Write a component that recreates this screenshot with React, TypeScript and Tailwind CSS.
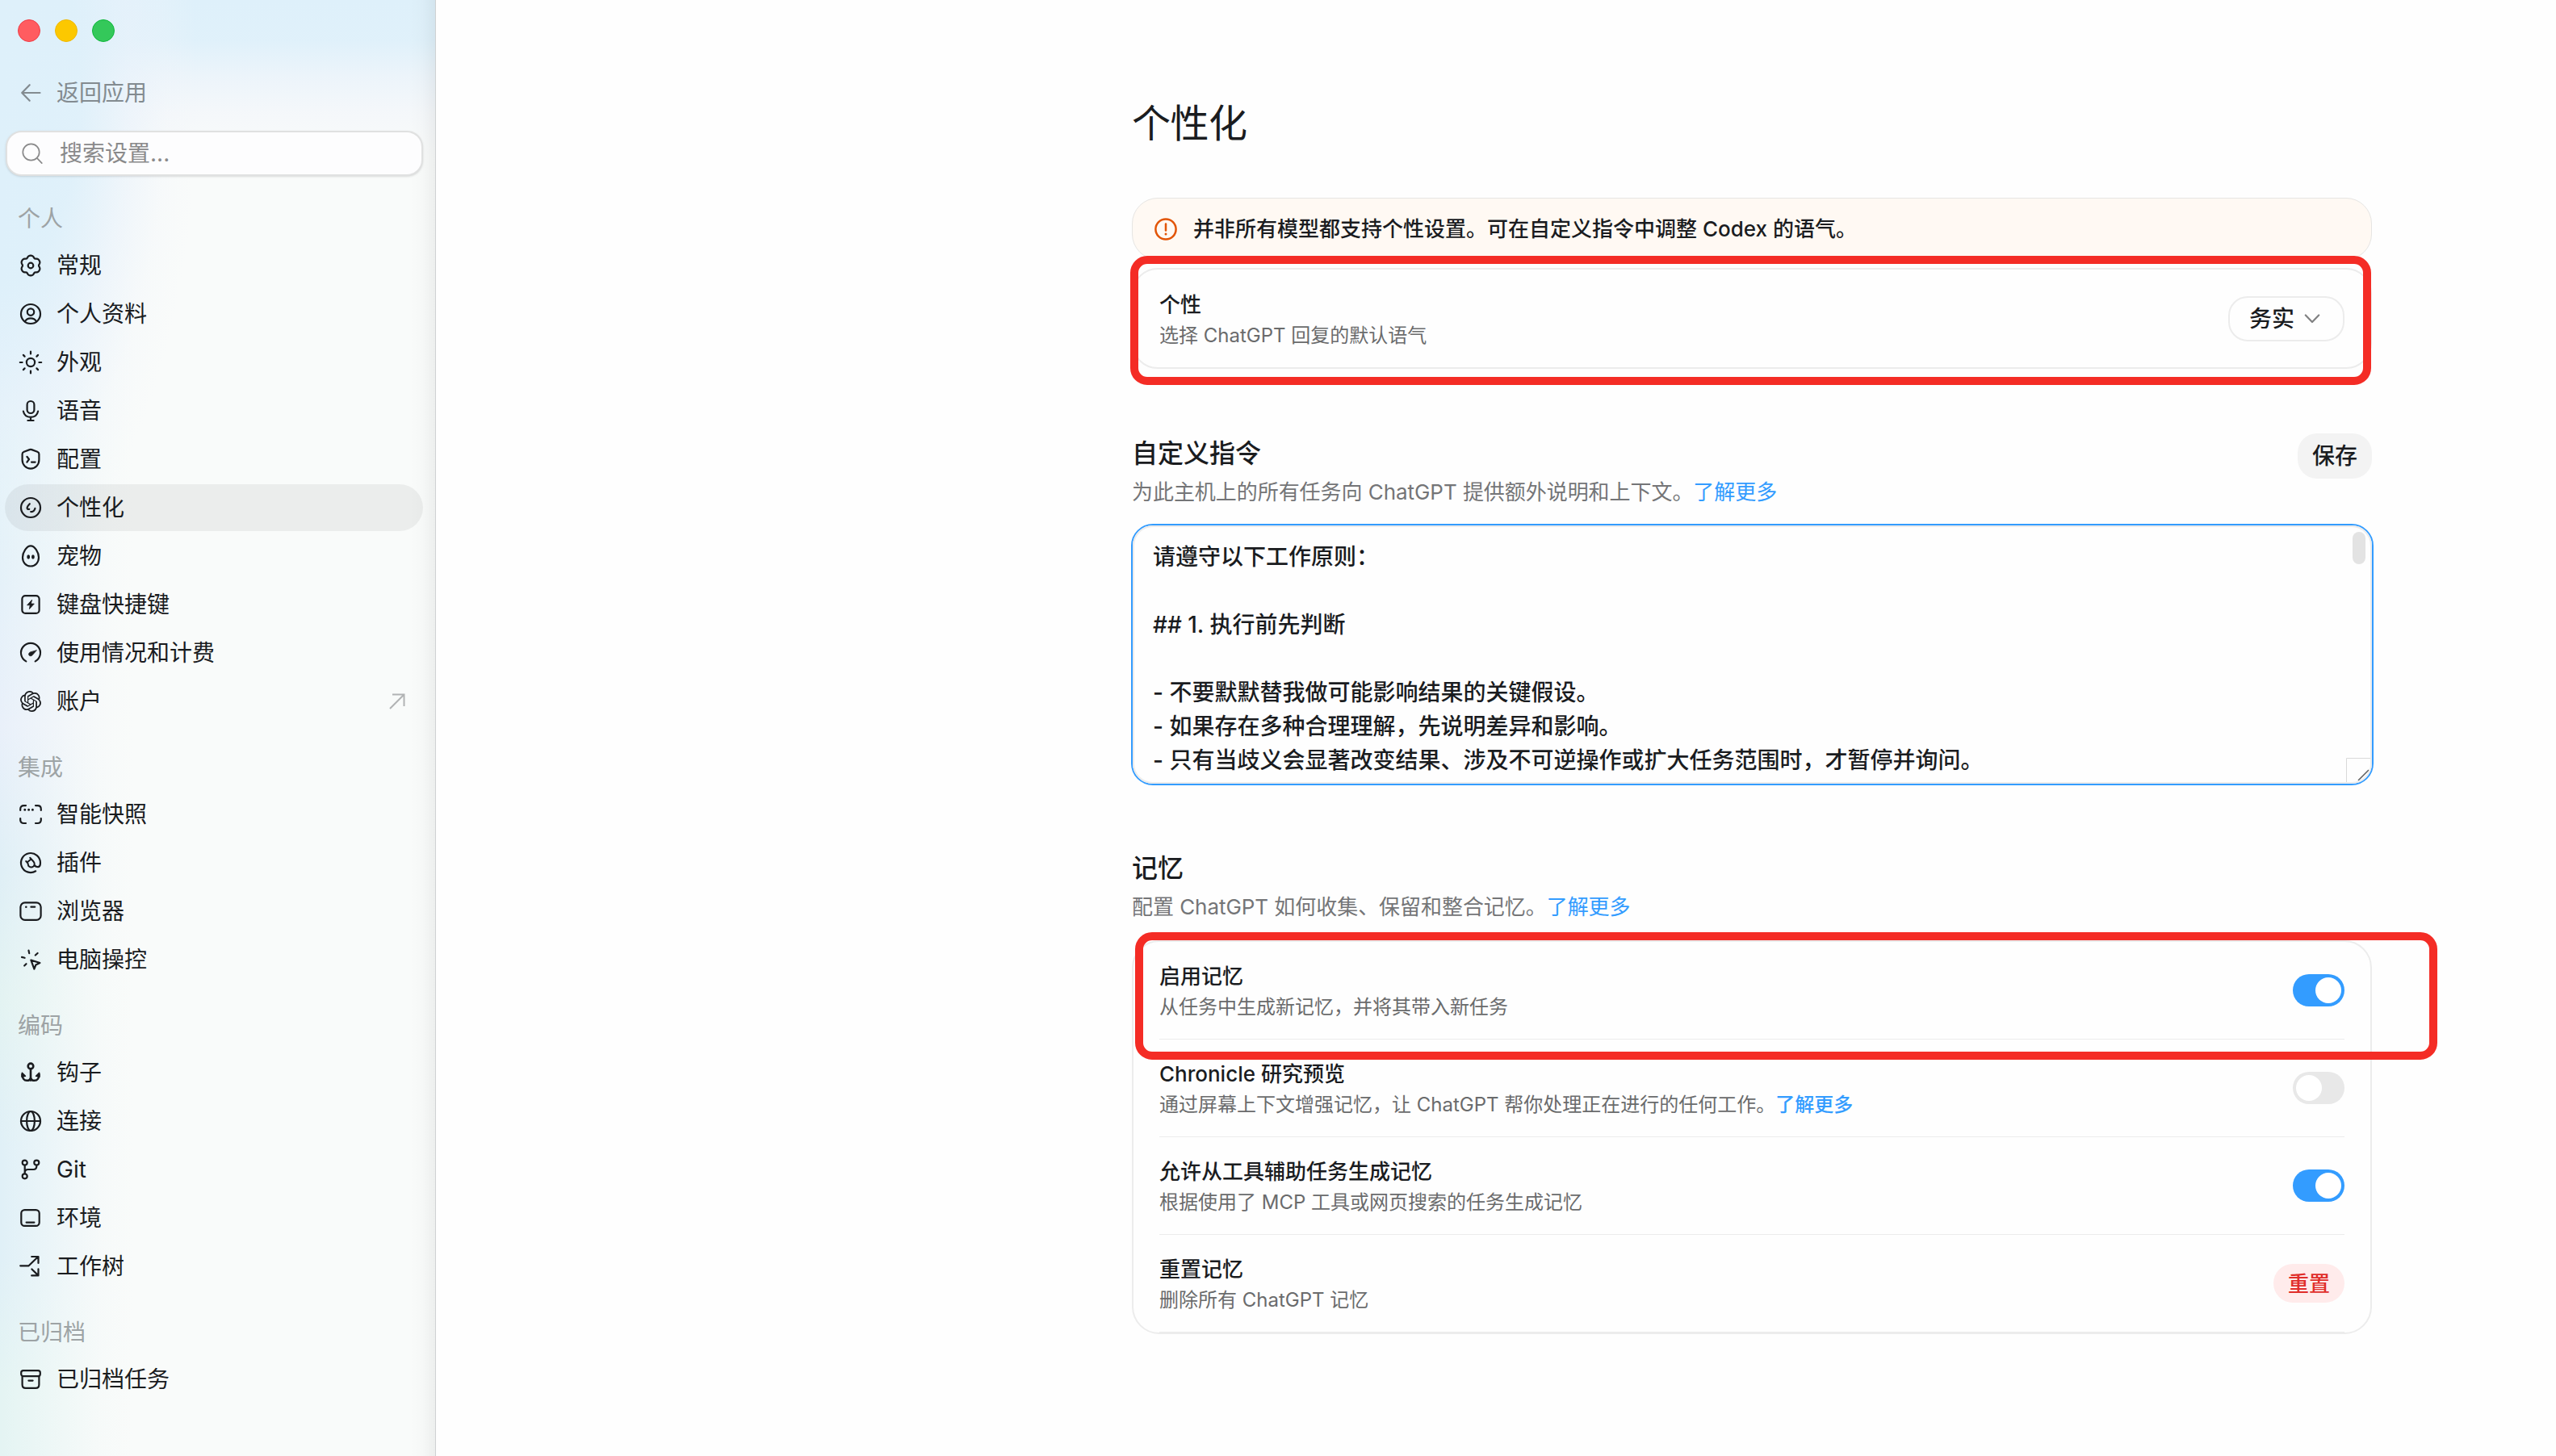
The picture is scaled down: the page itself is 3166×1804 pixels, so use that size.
import { useState } from "react";
import type { ReactNode } from "react";
import { SiOpenai } from "react-icons/si";

// Six-lobed outline used by the settings icon
const gearPath =
  Array.from({ length: 90 }, (_, i) => {
    const a = (i / 90) * Math.PI * 2;
    const r = 11.4 + 1.15 * Math.cos(6 * (a - Math.PI / 2)) - 0.25 * Math.cos(12 * (a - Math.PI / 2));
    return `${i === 0 ? "M" : "L"}${(14 + r * Math.cos(a)).toFixed(2)} ${(14 + r * Math.sin(a)).toFixed(2)}`;
  }).join("") + "Z";

function Icon({ children }: { children: ReactNode }) {
  return (
    <svg viewBox="0 0 28 28" className="w-7 h-7 shrink-0 overflow-visible" fill="none" stroke="currentColor" strokeWidth={2.2} strokeLinecap="round" strokeLinejoin="round">
      {children}
    </svg>
  );
}

const icons: Record<string, ReactNode> = {
  gear: <Icon><path d={gearPath} /><circle cx="14" cy="14" r="3.3" /></Icon>,
  profile: <Icon><circle cx="14" cy="14" r="12" /><circle cx="14" cy="11.6" r="4.2" /><path d="M7 23.2C8.6 20.6 11 19.4 14 19.4s5.4 1.2 7 3.8" /></Icon>,
  sun: (
    <Icon>
      <circle cx="14" cy="14" r="5.1" />
      <path d="M14 .6v2.8M14 24.6v2.8M.8 14h2.8M24.4 14h2.8M4.9 4.9l1.7 1.7M21.4 21.4l1.7 1.7M4.9 23.1l1.7-1.7M21.4 6.6l1.7-1.7" />
    </Icon>
  ),
  mic: <Icon><rect x="9.6" y="2" width="8.8" height="15" rx="4.4" /><path d="M4.9 14.6C5.8 19 9.4 21.8 14 21.8s8.2-2.8 9.1-7.2M14 21.8v4M10.4 26h7.2" /></Icon>,
  shield: (
    <Icon>
      <path d="M12.7 2.1a3.6 3.6 0 0 1 2.6 0l7 2.7c1.3.5 2.1 1.5 2.1 2.8v7.2c0 6.2-4.6 10.8-10.4 10.8S3.6 21 3.6 14.8V7.6c0-1.3.8-2.3 2.1-2.8z" />
      <path d="M9.4 10.8l2.6 3.2-2.6 3.6M15 17.6h4.6" />
    </Icon>
  ),
  face: <Icon><circle cx="14" cy="14" r="12" /><path d="M12.8 9.2C11 11 9.6 13.2 9.6 14.6c0 1 .8 1.5 2.6 1.3M14.2 19.1c2.6 0 4.6-1.6 5.2-4.2" /></Icon>,
  egg: (
    <Icon>
      <path d="M14 1.3C19 1.3 24 9.2 24 15.8c0 6-4.2 10.7-10 10.7S4 21.8 4 15.8C4 9.2 9 1.3 14 1.3z" />
      <ellipse cx="11.2" cy="15" rx="1.9" ry="2.7" fill="currentColor" stroke="none" />
      <ellipse cx="16.9" cy="15" rx="1.9" ry="2.7" fill="currentColor" stroke="none" />
    </Icon>
  ),
  keyboard: (
    <Icon>
      <rect x="3.4" y="3.1" width="21.2" height="21.8" rx="4" />
      <path d="M15.4 8.4l-5.8 6.4h3.6l-.8 4.8 5.9-6.5h-3.7z" fill="currentColor" strokeWidth=".8" />
    </Icon>
  ),
  gauge: (
    <Icon>
      <path d="M8.3 24.4a12 12 0 1 1 11.4 0" />
      <path d="M21.2 10.9l-5.2 5.9c-1.2 1.2-3 1.3-3.9.2-.9-1.2-.5-2.9.9-3.8z" fill="currentColor" strokeWidth=".8" />
    </Icon>
  ),
  account: <SiOpenai className="w-7 h-7 p-px shrink-0" />,
  snapshot: (
    <Icon>
      <path d="M8 3.1H5.5C2.8 3.1 1.2 4.7 1.2 7.4V9M20 3.1h2.5c2.7 0 4.3 1.6 4.3 4.3V9M8 25H5.5c-2.7 0-4.3-1.6-4.3-4.3V19M20 25h2.5c2.7 0 4.3-1.6 4.3-4.3V19" />
      <path d="M6.8 8.2h0M11.6 8.2h0M16.4 8.2h0" strokeWidth="3" />
    </Icon>
  ),
  plugin: (
    <Icon>
      <path d="M20.2 24.3A12 12 0 1 1 26 14c0 3.2-1.1 5.2-3.3 5.2-1.6 0-2.7-.8-3.7-1.9" />
      <path d="M9.6 13.6l5.2-4.3M8.2 12l2.3 2.7M13.2 7.8l4.3 4.7c1.8 2 1.5 4.6-.2 6.1-1.8 1.5-4.5 1.2-6-.7l-.9-3.3M18.2 17.4l1.2.8" strokeWidth="2" />
    </Icon>
  ),
  browser: <Icon><rect x="1.4" y="3.3" width="25.2" height="21.6" rx="5.5" /><path d="M8.3 8.7h0" strokeWidth="2.6" /><path d="M14.4 8.7h4.8" /></Icon>,
  computer: (
    <Icon>
      <path d="M11.5 2.7l.7 3.4M22.6 6l-2.8 2.5M3 10.9l3.6.9M6.2 21.5l2.3-2.3" />
      <path d="M14.4 14.6l11 3.4-5 2.4-2 5.2z" />
    </Icon>
  ),
  anchor: (
    <Icon>
      <g strokeWidth="2.6">
        <circle cx="14" cy="5.9" r="3.3" />
        <path d="M14 9.4v14.2M3.6 16.2c0 4.6 2.3 7.6 5.6 7.6 2.4 0 4.4-1.4 4.8-3.6.4 2.2 2.4 3.6 4.8 3.6 3.3 0 5.6-3 5.6-7.6" />
      </g>
      <path d="M3.4 14.2l4 4-4.4.8zM24.6 14.2l-4 4 4.4.8z" fill="currentColor" strokeWidth="1.6" />
    </Icon>
  ),
  globe: <Icon><circle cx="14" cy="14" r="12" /><ellipse cx="14" cy="14" rx="4.9" ry="12" /><path d="M2 14h24" /></Icon>,
  git: (
    <Icon>
      <circle cx="6.7" cy="5.6" r="3" /><circle cx="21.3" cy="5.6" r="3" /><circle cx="6.7" cy="22.3" r="3" />
      <path d="M6.7 8.8v10.2M21.3 8.8v1.2c0 2.6-1.4 4-4 4h-6.6c-2.6 0-4 1.4-4 4" />
    </Icon>
  ),
  environment: <Icon><rect x="2.3" y="4.1" width="22.4" height="19.8" rx="4.2" /><path d="M8.6 19.6h9.8" /></Icon>,
  worktree: <Icon><path d="M1.2 13.3h10.4L23 2.3M15.2 2h8.3v8M15.4 17.5l7.8 7.6M15.2 25.4h8.3v-8" /></Icon>,
  archive: <Icon><rect x="2.2" y="3.1" width="23.6" height="7" rx="2.6" /><path d="M3.6 10.1v10.4c0 2.7 1.4 4.4 4.2 4.4h12.4c2.8 0 4.2-1.7 4.2-4.4V10.1M11.4 15.6h5.2" /></Icon>,
};

const sections = [
  {
    title: "个人",
    items: [
      { icon: "gear", label: "常规" },
      { icon: "profile", label: "个人资料" },
      { icon: "sun", label: "外观" },
      { icon: "mic", label: "语音" },
      { icon: "shield", label: "配置" },
      { icon: "face", label: "个性化" },
      { icon: "egg", label: "宠物" },
      { icon: "keyboard", label: "键盘快捷键" },
      { icon: "gauge", label: "使用情况和计费" },
      { icon: "account", label: "账户", external: true },
    ],
  },
  {
    title: "集成",
    items: [
      { icon: "snapshot", label: "智能快照" },
      { icon: "plugin", label: "插件" },
      { icon: "browser", label: "浏览器" },
      { icon: "computer", label: "电脑操控" },
    ],
  },
  {
    title: "编码",
    items: [
      { icon: "anchor", label: "钩子" },
      { icon: "globe", label: "连接" },
      { icon: "git", label: "Git" },
      { icon: "environment", label: "环境" },
      { icon: "worktree", label: "工作树" },
    ],
  },
  { title: "已归档", items: [{ icon: "archive", label: "已归档任务" }] },
];

const instructions = [
  "请遵守以下工作原则：",
  "",
  "## 1. 执行前先判断",
  "",
  "- 不要默默替我做可能影响结果的关键假设。",
  "- 如果存在多种合理理解，先说明差异和影响。",
  "- 只有当歧义会显著改变结果、涉及不可逆操作或扩大任务范围时，才暂停并询问。",
];

function Sidebar() {
  const [active, setActive] = useState("个性化");

  return (
    <aside className="relative w-[540px] shrink-0 overflow-hidden border-r border-[#cfd2d3] bg-[#f9fbfa] bg-[linear-gradient(to_bottom,#def0fa_0px,#def0faf0_50px,#e8f2fac0_95px,#f0f4fa80_140px,#f9fbfa00_195px),linear-gradient(to_right,#f9fbfa00_0px,#f9fbfa80_70px,#f9fbfae0_125px,#f9fbfa_165px),linear-gradient(to_bottom,#def0fa_0px,#def0fa_380px,#e1f2f8_560px,#e9f0fa_900px,#dfeff6_1080px,#e3f3f2_1240px,#e0f0f7_1420px,#e0f0f7_1560px,#e4f4f3_1720px)]">
      <div className="absolute inset-0 bg-[radial-gradient(ellipse_245px_600px_at_0px_110px,#def0fa_0%,#def0fae6_40%,#e9f2fb99_66%,#f0f5fb40_84%,#f9fbfa00_100%)]" />
      <div className="absolute right-0 top-0 h-full w-8 bg-linear-to-r from-transparent via-black/[0.012] to-black/[0.05]" />
      <div className="relative text-[28px] leading-[58px] text-[#1a1c1f]">
        <div className="flex gap-[18px] pl-[22px] pt-6">
          <span className="w-7 h-7 rounded-full border border-[#f03c46] bg-[#ff5c60]" />
          <span className="w-7 h-7 rounded-full border border-[#f0b800] bg-[#fcc800]" />
          <span className="w-7 h-7 rounded-full border border-[#10b83c] bg-[#34c85a]" />
        </div>

        <button className="mt-[34px] flex h-[58px] items-center gap-[18px] pl-6 text-[#838b90]">
          <Icon><path d="M25.5 14H3.5M12.7 4.2L3.2 14l9.5 9.8" /></Icon>
          返回应用
        </button>

        <div className="mt-[18px] ml-[7px] flex h-14 w-[517px] items-center gap-[21px] rounded-[20px] border-2 border-[#e0e1e1] bg-[#fdfdfe] pl-4 text-[#8a8a8b] shadow-sm">
          <Icon><g strokeWidth="1.7"><circle cx="13.5" cy="12.5" r="10.2" /><path d="M20.8 19.9l6 6.2" /></g></Icon>
          <span>搜索设置...</span>
        </div>

        <nav className="mt-6 ml-[6px] flex w-[518px] flex-col gap-6">
          {sections.map(section => (
            <div key={section.title}>
              <h3 className="h-[58px] pl-4 text-[#9da3a5]">{section.title}</h3>
              <div className="flex flex-col gap-0.5">
                {section.items.map(item => (
                  <button
                    key={item.label}
                    onClick={() => setActive(item.label)}
                    className={`flex h-[58px] items-center gap-[18px] rounded-full pl-[18px] pr-5 ${active === item.label ? "bg-black/[0.055]" : ""}`}
                  >
                    {icons[item.icon]}
                    <span className="flex-1 text-left">{item.label}</span>
                    {"external" in item && (
                      <svg viewBox="0 0 24 24" className="w-6 h-6 text-[#b1b3b4]" fill="none" stroke="currentColor" strokeWidth="2">
                        <path d="M3 21L20 4M6 3.5h14.5V18" />
                      </svg>
                    )}
                  </button>
                ))}
              </div>
            </div>
          ))}
        </nav>
      </div>
    </aside>
  );
}

function Toggle({ initial }: { initial: boolean }) {
  const [on, setOn] = useState(initial);
  return (
    <button
      role="switch"
      aria-checked={on}
      onClick={() => setOn(!on)}
      className={`flex h-10 w-16 items-center rounded-full px-1 ${on ? "justify-end bg-[#339cff]" : "bg-[#e8e8e8]"}`}
    >
      <span className="w-8 h-8 rounded-full bg-white" />
    </button>
  );
}

function Row({ title, desc, link, children }: { title: string; desc: string; link?: string; children: ReactNode }) {
  return (
    <div className="flex flex-1 items-center justify-between">
      <div className="pt-1">
        <p className="text-[26px] leading-[38px] font-medium text-[#1a1c1f]">{title}</p>
        <p className="text-2xl leading-[38px] text-[#6a6b6c]">
          {desc}
          {link && <a className="font-medium text-[#339cff]">{link}</a>}
        </p>
      </div>
      {children}
    </div>
  );
}

function SectionHeading({ title, desc }: { title: string; desc: string }) {
  return (
    <div>
      <h2 className="text-[32px] leading-[49px] font-medium">{title}</h2>
      <p className="mt-1 text-[26px] leading-10 tracking-[-0.05px] text-[#747577]">
        {desc}
        <a className="text-[#339cff]">了解更多</a>
      </p>
    </div>
  );
}

export default function App() {
  return (
    <div className="flex h-[1804px] w-[3166px] overflow-hidden bg-[#fefefe] font-[Inter,'Noto_Sans_CJK_SC',sans-serif] text-[#1a1c1f]">
      <Sidebar />

      <main className="flex-1 pl-[862px] pt-[121px]">
        <div className="flex w-[1536px] flex-col">
          <h1 className="text-5xl leading-[64px] tracking-[-0.5px]">个性化</h1>

          <div className="mt-[60px] flex h-[77px] items-center gap-5 rounded-[32px] border border-[#e6e5e3] bg-[#fff9f3] pl-[27px] text-[26px] font-medium">
            <svg viewBox="0 0 28 28" className="w-7 h-7 text-[#e25507]" fill="none" stroke="currentColor" strokeWidth="2.5" strokeLinecap="round">
              <circle cx="14" cy="14" r="12.6" />
              <path d="M14 7.6v7.8" />
              <path d="M14 20h0" strokeWidth="3" />
            </svg>
            <span>并非所有模型都支持个性设置。可在自定义指令中调整 Codex 的语气。</span>
          </div>

          <section className="relative mt-[10px] flex h-[125px] rounded-[32px] border-2 border-[#ececec] px-8">
            <Row title="个性" desc="选择 ChatGPT 回复的默认语气">
              <button className="flex h-14 w-36 items-center gap-3 rounded-3xl border-2 border-[#ececec] pl-6 text-[28px] font-medium">
                务实
                <svg viewBox="0 0 20 12" className="w-5 h-3 text-[#808182]" fill="none" stroke="currentColor" strokeWidth="2.2" strokeLinecap="round" strokeLinejoin="round">
                  <path d="M1.8 1.5L10 10l8.2-8.5" />
                </svg>
              </button>
            </Row>
            <div className="pointer-events-none absolute -left-1 -top-[17px] h-40 w-[1537px] rounded-[21px] border-[10px] border-[#f42c25]" />
          </section>

          <div className="mt-20 flex items-start justify-between">
            <SectionHeading title="自定义指令" desc="为此主机上的所有任务向 ChatGPT 提供额外说明和上下文。" />
            <button className="h-14 w-[92px] rounded-3xl bg-[#f3f3f3] text-[28px] font-medium">保存</button>
          </div>

          <div className="-ml-px mt-[19px] h-[324px] w-[1539px] rounded-[27px] border-2 border-[#339cff]">
            <div className="relative h-full overflow-hidden rounded-[25px] border-2 border-[#ececec] pl-[23px] pt-4 text-[28px] leading-[42px] font-medium">
              {instructions.map((line, i) => (
                <p key={i} className="h-[42px]">{line}</p>
              ))}
              <span className="absolute right-1.5 top-1.5 h-10 w-4 rounded-full bg-[#e3e3e3]" />
              <svg viewBox="0 0 30 30" className="absolute bottom-0 right-0 w-[30px] h-[30px]" fill="none">
                <path d="M.5 30V.5H30" stroke="#d9d9d9" />
                <path d="M15 28L28 15M22 28l6-6" stroke="#5c5c5c" strokeWidth="1.5" />
              </svg>
            </div>
          </div>

          <div className="mt-[78px]">
            <SectionHeading title="记忆" desc="配置 ChatGPT 如何收集、保留和整合记忆。" />
          </div>

          <section className="relative mt-[21px] flex h-[488px] flex-col divide-y divide-[#ececec] rounded-[34px] border-2 border-[#ececec] px-8">
            <Row title="启用记忆" desc="从任务中生成新记忆，并将其带入新任务">
              <Toggle initial={true} />
            </Row>
            <Row title="Chronicle 研究预览" desc="通过屏幕上下文增强记忆，让 ChatGPT 帮你处理正在进行的任何工作。" link="了解更多">
              <Toggle initial={false} />
            </Row>
            <Row title="允许从工具辅助任务生成记忆" desc="根据使用了 MCP 工具或网页搜索的任务生成记忆">
              <Toggle initial={true} />
            </Row>
            <Row title="重置记忆" desc="删除所有 ChatGPT 记忆">
              <button className="h-12 w-[88px] rounded-full bg-[#ffebeb] text-[26px] font-medium text-[#e02e2a]">重置</button>
            </Row>
            <div className="pointer-events-none absolute left-0.5 -top-3 h-[158px] w-[1613px] rounded-[21px] border-[10px] border-[#f42c25]" />
          </section>
        </div>
      </main>
    </div>
  );
}
